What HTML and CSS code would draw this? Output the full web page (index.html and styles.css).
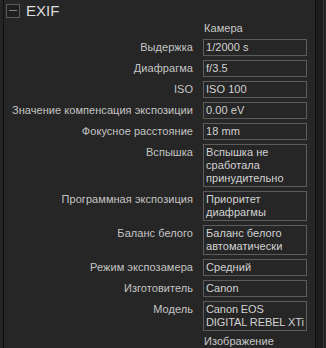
FILE: index.html
```html
<!DOCTYPE html>
<html>
<head>
<meta charset="utf-8">
<link rel="stylesheet" href="styles.css">
</head>
<body>
<div class="frame">
  <div class="gutter"></div>
  <div class="panel">
    <div class="header">
      <span class="toggle"><span class="minus"></span></span>
      <span class="title">EXIF</span>
    </div>
    <div class="grid">
      <div class="label"></div><div class="section">Камера</div>
      <div class="label">Выдержка</div><div class="value">1/2000 s</div>
      <div class="label">Диафрагма</div><div class="value">f/3.5</div>
      <div class="label">ISO</div><div class="value">ISO 100</div>
      <div class="label">Значение компенсация экспозиции</div><div class="value">0.00 eV</div>
      <div class="label">Фокусное расстояние</div><div class="value">18 mm</div>
      <div class="label">Вспышка</div><div class="value">Вспышка не сработала принудительно</div>
      <div class="label">Программная экспозиция</div><div class="value">Приоритет диафрагмы</div>
      <div class="label">Баланс белого</div><div class="value">Баланс белого автоматически</div>
      <div class="label">Режим экспозамера</div><div class="value">Средний</div>
      <div class="label">Изготовитель</div><div class="value">Canon</div>
      <div class="label">Модель</div><div class="value nowrap">Canon EOS<br>DIGITAL REBEL XTi</div>
      <div class="label"></div><div class="section">Изображение</div>
    </div>
  </div>
  <div class="scroll"></div>
</div>
</body>
</html>
```
FILE: styles.css
```css
html, body {
  margin: 0;
  padding: 0;
  background: #242424;
  height: 100%;
  overflow: hidden;
}
.frame {
  display: flex;
  height: 348px;
  font-family: "Liberation Sans", Arial, sans-serif;
  font-size: 11px;
  letter-spacing: 0.05px;
  line-height: 13px;
  color: #c4c4c4;
}
.gutter {
  width: 3px;
  flex: none;
  border-right: 1px solid #0e0e0e;
  background: #242424;
}
.panel {
  width: 311px;
  flex: none;
  background: #262626;
  border-right: 1px solid #0e0e0e;
  overflow: hidden;
}
.header {
  display: flex;
  align-items: center;
  height: 22px;
  padding-left: 2px;
  gap: 6px;
}
.toggle {
  width: 12px;
  height: 12px;
  border: 1px solid #5a5a5a;
  background: #1f1f1f;
  display: flex;
  align-items: center;
  justify-content: center;
  margin-top: -1px;
}
.minus {
  width: 8px;
  height: 1px;
  background: #808080;
}
.title {
  font-size: 15px;
  letter-spacing: 0;
  line-height: 16px;
  color: #dcdcdc;
}
.grid {
  display: grid;
  grid-template-columns: 189px 104px;
  column-gap: 10px;
  row-gap: 4px;
}
.label {
  text-align: right;
  padding-top: 2px;
  white-space: nowrap;
}
.section {
  padding-left: 1px;
  color: #c8c8c8;
}
.value {
  border: 1px solid #5c5c5c;
  padding: 1px 1px 1px 2px;
  color: #d2d2d2;
}
.nowrap {
  white-space: nowrap;
  letter-spacing: -0.1px;
}
.scroll {
  width: 7px;
  flex: none;
  background: #1c1c1c;
  border-right: 1px solid #363636;
}
```
